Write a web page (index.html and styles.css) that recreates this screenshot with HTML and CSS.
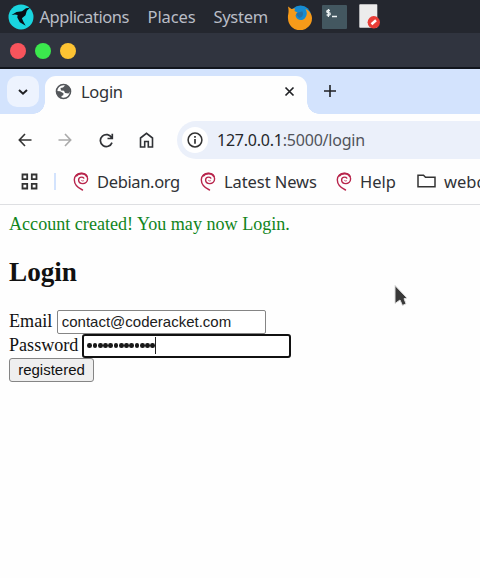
FILE: index.html
```html
<!DOCTYPE html>
<html lang="en">
<head>
<meta charset="utf-8">
<title>Login</title>
<link rel="stylesheet" href="styles.css">
</head>
<body>
<svg class="defs" width="0" height="0"><defs>
<symbol id="swirl" viewBox="0 0 16 19"><path d="M9.500 18C5 16 1.300 12 1.300 7.800 1.300 3.800 4.500 1.200 8.300 1.200c3.700 0 6.300 2.400 6.300 5.600 0 2.900-2.200 4.800-4.700 4.800-2.600 0-4.300-1.600-4.300-3.500 0-1.800 1.300-3 3-3 1 0 1.800.4 2.200 1" fill="none" stroke="#b8254c" stroke-width="1.400" stroke-linecap="round"/><path d="M3 4.300C5.500.7 12.500.5 14 5" fill="none" stroke="#b8254c" stroke-width="1.900"/><path d="M8.300 8.300c.8.900 2 .8 2.600.1" fill="none" stroke="#b8254c" stroke-width=".8"/></symbol>
</defs></svg>
<header class="panel">
<svg class="logo" width="26" height="26" viewBox="0 0 26 26"><circle cx="13" cy="13" r="12.500" fill="#19d5df"/><path d="M3.500 11 8.500 8l5.500-.8L18 4.300l4-.6-3.200 3-1.300 4.500-3.600 3 1.400 3.300 2.400 4.200-5.900-3.500-2.500-4.700.3-2.500-2.600-.5Z" fill="#080d15"/></svg>
<span class="menu applications">Applications</span><span class="menu places">Places</span><span class="menu system">System</span>
<svg class="firefox" width="26" height="26" viewBox="0 0 26 26"><circle cx="13.500" cy="12" r="10.500" fill="#168bd1"/><path d="M1 2.500 4.500 5 8 4.500 7.500 7l3 1.500-2 3c1 5 7 6 9.500 2.500 3-4 1.500-7 .5-9 4.500 2 6.500 5.500 6.500 9A12 12 0 0 1 1 14.500C.5 10 2.500 9 1 2.500Z" fill="#f69a19"/><path d="M9 10c3-3 5-1 6-3 2 3 1 6-3 7" fill="#2671a5"/></svg>
<svg class="terminal" width="25" height="24" viewBox="0 0 25 24"><rect width="25" height="24" rx="1" fill="#435760"/><path d="M8 5.500H5.800Q4.800 5.500 4.800 6.500t1 1.200H7q1.200 0 1.200 1.200T7 10H4.600M6.400 4v8M10 11.500h5" fill="none" stroke="#edf3f4" stroke-width="1.300"/></svg>
<svg class="doc" width="22" height="25" viewBox="0 0 22 25"><rect x=".3" y=".2" width="18" height="23.500" rx=".7" fill="#ececec"/><circle cx="14.800" cy="18.300" r="6.200" fill="#e93d37"/><path d="m12.500 20.300 4.500-4" stroke="#fff" stroke-width="2.500"/></svg>
</header>
<div class="titlebar"><i class="red"></i><i class="green"></i><i class="yellow"></i></div>
<div class="tabs">
<div class="tab-search"><svg width="12" height="8" viewBox="0 0 12 8"><path d="m2 2 4 3.700L10 2" fill="none" stroke="#202124" stroke-width="2"/></svg></div>
<div class="tab"><svg class="globe" width="17" height="17" viewBox="0 0 17 17"><circle cx="8.500" cy="8.500" r="7" fill="#fff" stroke="#54575b" stroke-width="1.600"/><path d="M10.500 2 8 4.500 5.500 5l.5 2.500 3 .3 1 2.200 3.500.5 2-2.500C15.500 5 13.500 2.500 10.500 2ZM1.500 8l3.500.2 3.500 2-.2 2L6.500 13v2C3.500 14 1.700 11.500 1.500 8Z" fill="#54575b"/></svg><span>Login</span><svg class="close" width="11" height="11" viewBox="0 0 11 11"><path d="m1.500 1.500 8 8m0-8-8 8" stroke="#202124" stroke-width="1.700"/></svg></div>
<svg class="plus" width="12" height="12" viewBox="0 0 12 12"><path d="M6 0v12M0 6h12" stroke="#202124" stroke-width="1.600"/></svg>
</div>
<nav class="toolbar">
<svg width="14" height="14" viewBox="0 0 14 14" class="back"><path d="M7 1 1.300 7 7 13M1.500 7H13.500" fill="none" stroke="#333" stroke-width="1.600"/></svg>
<svg width="14" height="14" viewBox="0 0 14 14" class="forward"><path d="m7 1 5.700 6L7 13M12.500 7H.5" fill="none" stroke="#aaa" stroke-width="1.600"/></svg>
<svg width="15" height="15" viewBox="0 0 15 15" class="reload"><path d="M12.700 4.800A6 6 0 1 0 13 9.600M13.300.8v4.700H8.500" fill="none" stroke="#303236" stroke-width="1.700"/></svg>
<svg width="15" height="16" viewBox="0 0 15 16" class="home"><path d="M1.500 6 7.500 1.300 13.500 6v9H9.300V9.500H5.700V15H1.500Z" fill="none" stroke="#303236" stroke-width="1.600"/></svg>
<div class="address"><div class="site-info"><svg width="16" height="16" viewBox="0 0 16 16"><circle cx="8" cy="8" r="6.900" fill="none" stroke="#333" stroke-width="1.500"/><path d="M8 7v4.800M8 4v1.700" stroke="#333" stroke-width="1.700"/></svg></div><span class="url"><b>127.0.0.1</b>:5000/login</span></div>
</nav>
<nav class="bookmarks">
<svg width="17" height="17" viewBox="0 0 17 17" class="apps"><path d="M1.500 1.500h4.700v4.700H1.500ZM10.800 1.500h4.700v4.700h-4.700ZM1.500 10.800h4.700v4.700H1.500ZM10.800 10.800h4.700v4.700h-4.700Z" fill="none" stroke="#333" stroke-width="1.800"/></svg>
<i class="separator"></i>
<div class="bookmark debian"><svg width="16" height="19"><use href="#swirl"/></svg><span>Debian.org</span></div>
<div class="bookmark news"><svg width="16" height="19"><use href="#swirl"/></svg><span>Latest News</span></div>
<div class="bookmark help"><svg width="16" height="19"><use href="#swirl"/></svg><span>Help</span></div>
<div class="bookmark folder"><svg width="19" height="14" viewBox="0 0 19 14"><path d="M1 1.200h5.500l2 2H18v9.600H1Z" fill="none" stroke="#333" stroke-width="1.500"/></svg><span>webdev</span></div>
</nav>
<main>
<p class="message">Account created! You may now Login.</p>
<h1>Login</h1>
<form>
<div class="row email"><label for="email">Email</label><input id="email" value="contact@coderacket.com"></div>
<div class="row password"><label>Password</label><div class="password-box"><span class="dots"><i></i><i></i><i></i><i></i><i></i><i></i><i></i><i></i><i></i><i></i><i></i><i></i><i></i></span><i class="caret"></i></div></div>
<button type="button">registered</button>
</form>
</main>
<svg class="cursor" width="17" height="25" viewBox="0 0 17 25"><path d="M2 1.500v18l5-3.500 2.500 5.500 3.500-1.800-2-5 3-.7Z" fill="#393939" stroke="#ddd"/></svg>
</body>
</html>
```
FILE: styles.css
```css
*{box-sizing:border-box}
body{margin:0;width:480px;height:578px;overflow:hidden;background:#fefefe;font-family:"Noto Sans",sans-serif;color:#303236}
svg{display:block;flex:none}
.defs{position:absolute}
.panel{height:33px;background:#24272f;color:#b9bdc6;display:flex;align-items:center;font-size:16.500px;white-space:nowrap}
.logo{margin-left:8px}
.menu{flex:none}
.applications{width:108px;margin-left:5.500px;letter-spacing:-.45px}
.places{width:66px;letter-spacing:-.1px}
.system{width:73.500px;letter-spacing:-.3px}
.terminal{margin-left:9px}
.doc{margin-left:12px}
.titlebar{height:36px;background:#30343f;border-bottom:2px solid #11151d;padding:1px 0 0 10px;display:flex;align-items:center;gap:9px}
.titlebar i{width:16px;height:16px;border-radius:50%}
.red{background:#f8545c}.green{background:#3be84d}.yellow{background:#fdc333}
.tabs{height:45px;background:#d3e3fd;padding:7px 0 0 7px;display:flex}
.tab-search{width:32px;height:31px;border-radius:10px;background:#edf3fe;display:grid;place-items:center}
.tab{position:relative;width:262px;height:38px;margin-left:6px;background:#fefefe;border-radius:11px 11px 0 0;padding:0 12px 8px 10px;display:flex;align-items:center;font-size:16.500px}
.tab::before,.tab::after{content:"";position:absolute;bottom:0;width:12px;height:12px}
.tab::before{left:-12px;background:radial-gradient(circle at 0 0,transparent 11.500px,#fefefe 12px)}
.tab::after{right:-12px;background:radial-gradient(circle at 100% 0,transparent 11.500px,#fefefe 12px)}
.tab span{margin-left:9px;letter-spacing:-.3px}
.close{margin-left:auto}
.plus{margin:9px 0 0 17px}
.toolbar{height:46px;padding:6px 0 0 18px;display:flex;align-items:center}
.forward{margin-left:26px}.reload{margin-left:27px}.home{margin-left:25px}
.address{height:38px;width:320px;flex:none;margin-left:23px;background:#ebf0fa;border-radius:19px 0 0 19px;padding-left:5px;display:flex;align-items:center}
.site-info{width:26px;height:26px;border-radius:50%;background:#fff;display:grid;place-items:center}
.url{margin-left:9px;font-size:16px;color:#51545a;letter-spacing:-.22px}
.url b{font-weight:400;color:#25272b}
.bookmarks{height:45px;border-bottom:1px solid #dedfe2;padding:0 0 2px 21px;display:flex;align-items:center;font-size:16.500px;white-space:nowrap;overflow:hidden}
.separator{width:2px;height:17px;flex:none;margin-left:16px;background:#d3e3fd}
.bookmark{display:flex;align-items:center;flex:none}
.bookmark span{margin-left:8px}
.debian{width:127px;margin-left:17px}
.debian span{letter-spacing:-.35px}
.news{width:136px}
.news span{letter-spacing:-.08px}
.help{width:81px}
.folder span{margin-left:8px}
main{padding:9px 9px 0;font-family:"Liberation Serif",serif;font-size:18.100px;line-height:21px;color:#111}
.message{margin:0;color:#11851b}
h1{font-size:27.200px;line-height:32px;margin:21px 0 21.500px}
.row{display:flex;height:24px}
.row label{line-height:23px}
input{margin-left:4.500px;width:209px;height:24px;border:1px solid #858585;border-radius:2px;padding:1px 4px;background:#fff;font:15px "Liberation Sans",sans-serif;color:#202020}
.password-box{margin-left:4px;width:209px;height:24px;border:2px solid #111;border-radius:3px;background:#fff;display:flex;align-items:center;padding-left:3px}
.dots{display:flex;gap:.5px}
.dots i{width:4.750px;height:4.750px;border-radius:50%;background:#171717}
.caret{width:1px;height:17px;background:#222}
button{display:block;width:85px;height:24px;padding:0;border:1px solid #858585;border-radius:3px;background:#efefef;font:15px "Liberation Sans",sans-serif;color:#111}
.cursor{position:absolute;left:393px;top:284px}
```
